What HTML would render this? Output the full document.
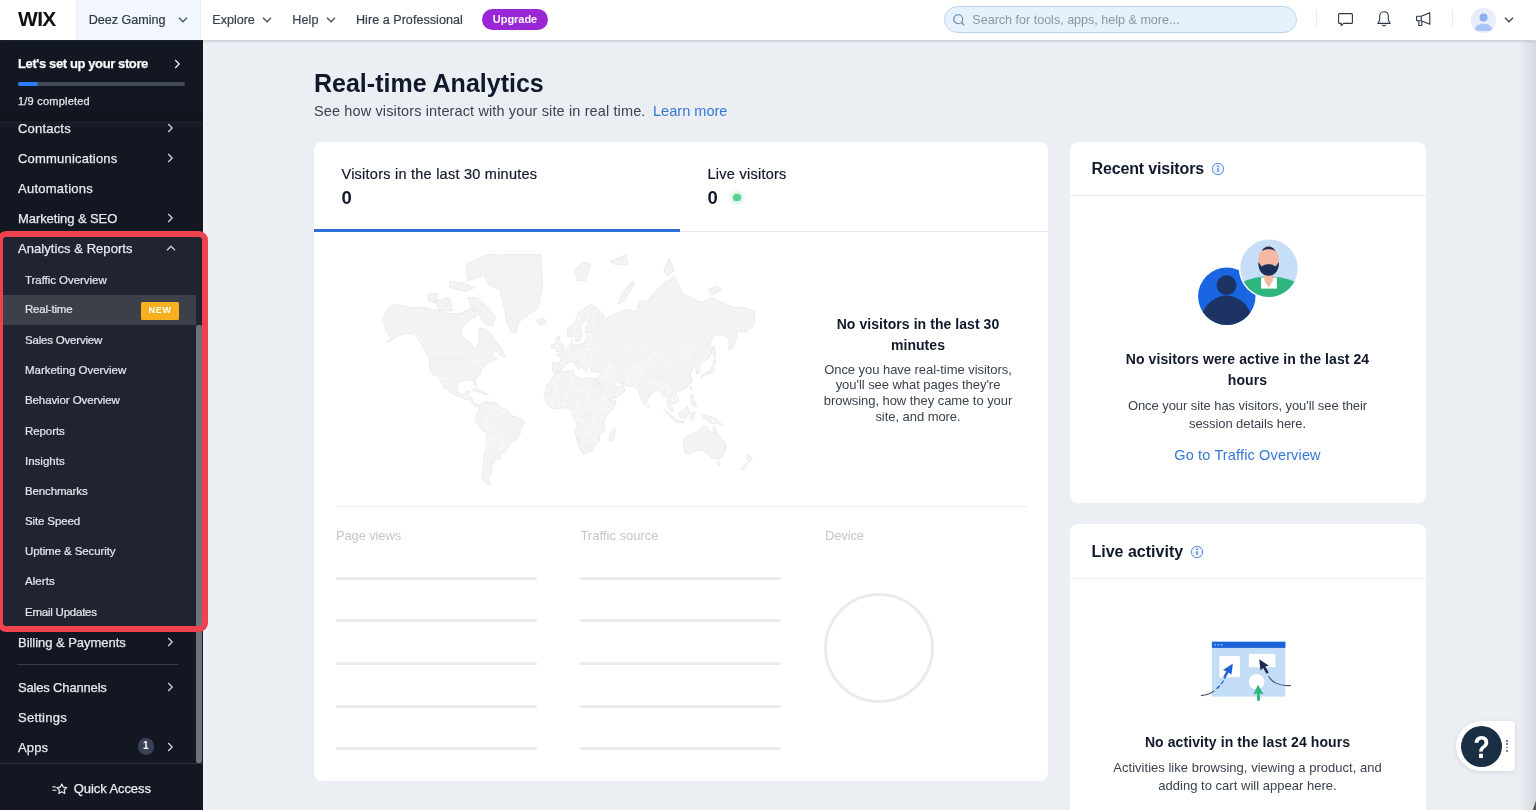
<!DOCTYPE html>
<html lang="en">
<head>
<meta charset="utf-8">
<title>Real-time Analytics</title>
<style>
*{box-sizing:border-box;margin:0;padding:0}
html,body{width:1536px;height:810px;overflow:hidden}
body>*{will-change:transform}
body{font-family:"Liberation Sans",sans-serif;background:#ebeef3;color:#10192b;position:relative}
.abs{position:absolute}
#top{position:absolute;left:0;top:0;width:1536px;height:40px;background:#fff;box-shadow:0 1px 3px rgba(60,80,110,.28);z-index:5}
#top .t{position:absolute;font-size:12.6px;color:#36424f;line-height:16px;white-space:nowrap;top:11.6px;-webkit-text-stroke:.2px #36424f}
#logo{position:absolute;left:18px;top:6px;font-weight:bold;font-size:19.5px;line-height:26px;letter-spacing:-0.6px;color:#111;transform-origin:0 50%;transform:scaleX(1.075)}
#site{position:absolute;left:76px;top:0;width:125px;height:40px;background:#f2f7fd;border-left:1px solid #e6eef8;border-right:1px solid #e6eef8}
#upg{position:absolute;left:482px;top:8.5px;width:66px;height:21.5px;border-radius:11px;background:#9a27d5;color:#fff;font-weight:bold;font-size:11px;line-height:21.5px;text-align:center;letter-spacing:-.05px}
#search{position:absolute;left:944px;top:6px;width:353px;height:26.5px;border-radius:13.5px;background:#e5f1fc;border:1px solid #b9d4f0}
#search span{position:absolute;left:27.3px;top:4.600px;font-size:12.6px;line-height:16px;color:#8996a4;white-space:nowrap;letter-spacing:-.02px}
.vd{position:absolute;top:10px;width:1px;height:18px;background:#e9edf1}
#side{position:absolute;left:0;top:40px;width:203px;height:770px;background:#131721;z-index:3;overflow:hidden}
#side .m{position:absolute;left:18px;font-size:13px;line-height:16px;color:#e6e9ef;white-space:nowrap;-webkit-text-stroke:.25px #e6e9ef}
#side .s{position:absolute;left:25px;font-size:11.5px;line-height:14px;color:#e3e6ec;white-space:nowrap;-webkit-text-stroke:.22px #e3e6ec}
#sub{position:absolute;left:0;top:194px;width:203px;height:394px;background:#1f2430}
#sel{position:absolute;left:0;top:255px;width:196px;height:30px;background:#3d4049}
#new{position:absolute;left:141px;top:262px;width:37.500px;height:17.500px;background:#f8b11e;color:#fff;font-size:9px;font-weight:bold;letter-spacing:.7px;line-height:17.500px;text-align:center;border-radius:1.500px;text-indent:.7px}
#red{position:absolute;left:-3.500px;top:230.600px;width:210.500px;height:401px;border:6.800px solid #f0414f;border-radius:9px;z-index:6}
#scroll{position:absolute;left:196.300px;top:285px;width:5.700px;height:437.500px;background:#6e727a;border-radius:2px}
.card{position:absolute;background:#fff;border-radius:8px}
h1{position:absolute;left:314px;top:68.3px;font-size:25px;line-height:30px;font-weight:bold;color:#10192b;white-space:nowrap;letter-spacing:0px}
.sk{position:absolute;height:3px;background:#e9ebed;border-radius:2px}
.c{text-align:center;position:absolute;white-space:nowrap}
.b14{font-size:14px;font-weight:bold;color:#10192b}
.d13{font-size:13px;color:#3a4350}
.lbl{position:absolute;top:386.3px;font-size:13px;line-height:16px;color:#c3c7cb;white-space:nowrap}
</style>
</head>
<body>

<div id="top">
  <div id="logo">WIX</div>
  <div id="site"></div>
  <div class="t" style="left:88.700px;color:#2a3542;letter-spacing:-.03px">Deez Gaming</div>
  <svg class="abs" style="left:178px;top:17px" width="10" height="6" viewBox="0 0 10 6"><path d="M1 .8l4 4 4-4" fill="none" stroke="#46525f" stroke-width="1.3"/></svg>
  <div class="t" style="left:212.300px;letter-spacing:-.03px">Explore</div>
  <svg class="abs" style="left:262px;top:17px" width="10" height="6" viewBox="0 0 10 6"><path d="M1 .8l4 4 4-4" fill="none" stroke="#46525f" stroke-width="1.3"/></svg>
  <div class="t" style="left:292.2px;letter-spacing:.15px">Help</div>
  <svg class="abs" style="left:326px;top:17px" width="10" height="6" viewBox="0 0 10 6"><path d="M1 .8l4 4 4-4" fill="none" stroke="#46525f" stroke-width="1.3"/></svg>
  <div class="t" style="left:356px;letter-spacing:.02px">Hire a Professional</div>
  <div id="upg">Upgrade</div>
  <div id="search">
    <svg class="abs" style="left:7px;top:6px" width="14" height="14" viewBox="0 0 14 14"><circle cx="6.2" cy="6.2" r="4.500" fill="none" stroke="#6583a3" stroke-width="1.1"/><path d="M9.500 9.500l2.800 2.800" stroke="#6583a3" stroke-width="1.1"/></svg>
    <span>Search for tools, apps, help &amp; more...</span>
  </div>
  <div class="vd" style="left:1315.500px"></div>
  <svg class="abs" style="left:1337px;top:12px" width="17" height="16" viewBox="0 0 17 16"><path d="M2.600 1.600h11.800c.6 0 1 .4 1 1v7.800c0 .6-.4 1-1 1H6.600l-2.400 2.200v-2.200H2.600c-.6 0-1-.4-1-1V2.600c0-.6.4-1 1-1z" fill="none" stroke="#2c3845" stroke-width="1.100" stroke-linejoin="round"/></svg>
  <svg class="abs" style="left:1376px;top:10px" width="16" height="18" viewBox="0 0 16 18"><path d="M8 1.800c-2.800 0-4.300 2-4.300 4.700v3.400L1.900 13.400h12.200l-1.800-3.500V6.500c0-2.700-1.500-4.700-4.300-4.700z" fill="none" stroke="#2c3845" stroke-width="1.100" stroke-linejoin="round"/><path d="M6.300 14.600c.3.900 1 1.300 1.700 1.300s1.400-.4 1.700-1.300" fill="none" stroke="#2c3845" stroke-width="1.100"/></svg>
  <svg class="abs" style="left:1415px;top:11px" width="17" height="17" viewBox="0 0 17 17"><path d="M1.600 5.300h4.600l8.600-3.500v11.400l-8.600-3.500H1.600z" fill="none" stroke="#2c3845" stroke-width="1.100" stroke-linejoin="round"/><path d="M3.800 9.900v4.600h3v-4.300" fill="none" stroke="#2c3845" stroke-width="1.100" stroke-linejoin="round"/><path d="M6.200 5.300v4.400" stroke="#2c3845" stroke-width="1.100"/></svg>
  <div class="vd" style="left:1451.500px"></div>
  <svg class="abs" style="left:1470.500px;top:7.500px" width="25" height="25" viewBox="0 0 26 26"><defs><clipPath id="av"><circle cx="13" cy="13" r="13"/></clipPath></defs><circle cx="13" cy="13" r="13" fill="#e9edfb"/><g clip-path="url(#av)"><circle cx="13" cy="9.800" r="4.200" fill="#8eaef0"/><path d="M3.500 24c.8-5.500 4.500-7.500 9.500-7.500s8.700 2 9.500 7.500z" fill="#a9c4f6"/></g></svg>
  <svg class="abs" style="left:1503.5px;top:17px" width="10" height="6" viewBox="0 0 10 6"><path d="M1 .8l4 4 4-4" fill="none" stroke="#3a4653" stroke-width="1.3"/></svg>
</div>

<div id="side">
  <div class="m" style="top:16.2px;font-weight:bold;color:#fff;letter-spacing:-.39px">Let's set up your store</div>
  <div class="abs" style="left:18px;top:42px;width:167px;height:3.600px;background:#434957;border-radius:2px"></div>
  <div class="abs" style="left:18px;top:42px;width:19.500px;height:3.600px;background:#2c7df7;border-radius:2px"></div>
  <div class="m" style="top:53.9px;font-size:11px;line-height:14px;color:#e1e5eb;letter-spacing:.22px">1/9 completed</div>
  <div class="abs" style="left:0;top:70px;width:203px;height:10.500px;background:linear-gradient(rgba(8,10,16,0),rgba(8,10,16,.45))"></div><div class="abs" style="left:0;top:80.500px;width:203px;height:6px;background:linear-gradient(#191d28,#161a24)"></div>
  <div id="sub"></div>
  <div id="sel"></div>
  <div class="m" style="top:80.8px;letter-spacing:0.19px;">Contacts</div>
  <div class="m" style="top:110.5px;letter-spacing:0.19px;">Communications</div>
  <div class="m" style="top:140.8px;letter-spacing:0.25px;">Automations</div>
  <div class="m" style="top:170.8px;letter-spacing:-0.08px;">Marketing &amp; SEO</div>
  <div class="m" style="top:201.3px;letter-spacing:0.06px;">Analytics &amp; Reports</div>
  <div class="s" style="top:232.7px;letter-spacing:-0.05px">Traffic Overview</div>
  <div class="s" style="top:262.3px;letter-spacing:-0.2px">Real-time</div>
  <div id="new">NEW</div>
  <div class="s" style="top:292.7px;letter-spacing:-0.2px">Sales Overview</div>
  <div class="s" style="top:323.2px;letter-spacing:-0.02px">Marketing Overview</div>
  <div class="s" style="top:353.2px;letter-spacing:-0.1px">Behavior Overview</div>
  <div class="s" style="top:383.7px;letter-spacing:-0.08px">Reports</div>
  <div class="s" style="top:413.7px;letter-spacing:0px">Insights</div>
  <div class="s" style="top:444.0px;letter-spacing:-0.14px">Benchmarks</div>
  <div class="s" style="top:474.0px;letter-spacing:-0.13px">Site Speed</div>
  <div class="s" style="top:504.3px;letter-spacing:-0.09px">Uptime &amp; Security</div>
  <div class="s" style="top:534.3px;letter-spacing:0.05px">Alerts</div>
  <div class="s" style="top:564.5px;letter-spacing:-0.23px">Email Updates</div>
  <div class="m" style="top:594.8px;letter-spacing:-0.04px;">Billing &amp; Payments</div>
  <div class="abs" style="left:17px;top:624px;width:161px;height:1px;background:#383e4b"></div>
  <div class="m" style="top:639.9px;letter-spacing:-0.17px;">Sales Channels</div>
  <div class="m" style="top:670.2px;letter-spacing:0.25px;">Settings</div>
  <div class="m" style="top:700.2px;letter-spacing:0.15px;">Apps</div>
  <div class="abs" style="left:137.500px;top:698px;width:16.500px;height:16.500px;border-radius:9px;background:#3a4058;color:#fff;font-size:10px;font-weight:bold;line-height:16.500px;text-align:center">1</div>
  <div id="scroll"></div>
  <div class="abs" style="left:0;top:723px;width:203px;height:47px;background:#131721;border-top:1.500px solid #2c313d"></div>
  <div class="m" style="left:73.800px;top:740.700px;color:#eceff4;letter-spacing:-.08px">Quick Access</div>
  <svg class="abs" style="left:52px;top:743px" width="16" height="12" viewBox="0 0 16 12"><path d="M9.800 1l1.500 3.100 3.400.5-2.500 2.400.6 3.400-3-1.600-3 1.600.6-3.400-2.500-2.400 3.400-.5z" fill="none" stroke="#eceff4" stroke-width="1.150" stroke-linejoin="round"/><path d="M.5 3.800h3.200M.5 7.200h4" stroke="#eceff4" stroke-width="1.150"/></svg>
  <svg class="abs" style="left:174px;top:18.5px" width="7" height="10" viewBox="0 0 7 10"><path d="M1.2 1l4 4-4 4" fill="none" stroke="#eef0f4" stroke-width="1.3"/></svg>
  <svg class="abs" style="left:167px;top:83px" width="7" height="10" viewBox="0 0 7 10"><path d="M1.2 1l4 4-4 4" fill="none" stroke="#cdd2db" stroke-width="1.3"/></svg>
  <svg class="abs" style="left:167px;top:113px" width="7" height="10" viewBox="0 0 7 10"><path d="M1.2 1l4 4-4 4" fill="none" stroke="#cdd2db" stroke-width="1.3"/></svg>
  <svg class="abs" style="left:167px;top:173px" width="7" height="10" viewBox="0 0 7 10"><path d="M1.2 1l4 4-4 4" fill="none" stroke="#cdd2db" stroke-width="1.3"/></svg>
  <svg class="abs" style="left:165.500px;top:204.500px" width="10" height="6" viewBox="0 0 10 6"><path d="M1 5.200l4-4 4 4" fill="none" stroke="#cdd2db" stroke-width="1.300"/></svg>
  <svg class="abs" style="left:167px;top:596.5px" width="7" height="10" viewBox="0 0 7 10"><path d="M1.2 1l4 4-4 4" fill="none" stroke="#cdd2db" stroke-width="1.3"/></svg>
  <svg class="abs" style="left:167px;top:642px" width="7" height="10" viewBox="0 0 7 10"><path d="M1.2 1l4 4-4 4" fill="none" stroke="#cdd2db" stroke-width="1.3"/></svg>
  <svg class="abs" style="left:167px;top:702px" width="7" height="10" viewBox="0 0 7 10"><path d="M1.2 1l4 4-4 4" fill="none" stroke="#cdd2db" stroke-width="1.3"/></svg>
</div>
<div id="red"></div>

<div class="abs" style="left:203px;top:40px;width:4px;height:770px;background:linear-gradient(90deg,#f1f5fa,#ebeef3)"></div>
<h1>Real-time Analytics</h1>
<div class="abs" style="left:314.300px;top:102.8px;font-size:14.500px;line-height:17px;color:#3a4350;white-space:nowrap;letter-spacing:.125px">See how visitors interact with your site in real time.</div>
<div class="abs" style="left:652.800px;top:102.8px;font-size:14.500px;line-height:17px;color:#3578d3;white-space:nowrap;letter-spacing:.03px">Learn more</div>

<div class="card" id="c1" style="left:314px;top:142px;width:734px;height:638.500px">
  <div class="abs" style="left:27.500px;top:23.800px;font-size:14.500px;line-height:17px;white-space:nowrap;letter-spacing:.24px;-webkit-text-stroke:.2px #10192b">Visitors in the last 30 minutes</div>
  <div class="abs" style="left:27.500px;top:45.100px;font-size:18.500px;line-height:21px;font-weight:bold">0</div>
  <div class="abs" style="left:393.500px;top:23.800px;font-size:14.500px;line-height:17px;white-space:nowrap;letter-spacing:.26px;-webkit-text-stroke:.2px #10192b">Live visitors</div>
  <div class="abs" style="left:393.500px;top:45.100px;font-size:18.500px;line-height:21px;font-weight:bold">0</div>
  <div class="abs" style="left:419px;top:51.500px;width:7.500px;height:7.500px;border-radius:4px;background:#56cf8f;box-shadow:0 0 3.500px 2.500px rgba(86,207,143,.3)"></div>
  <div class="abs" style="left:366px;top:89px;width:368px;height:1px;background:#e4e8ed"></div>
  <div class="abs" style="left:0;top:86.500px;width:366px;height:3px;background:#2e6fd5"></div>
  <svg class="abs" style="left:0;top:0" width="733" height="380" viewBox="0 0 733 380"><path d="M68.2,177.1 74.7,165.6 81.1,162.4 97.1,165.6 111.0,165.6 124.9,168.7 132.4,171.6 146.4,171.6 151.7,168.7 160.3,165.6 162.4,174.4 156.0,177.1 147.4,186.8 148.5,195.4 157.1,201.2 160.3,206.6 163.5,203.1 165.6,197.4 164.5,186.8 171.0,186.8 178.4,193.4 181.7,199.3 188.1,206.6 183.8,210.0 177.4,210.0 179.5,214.9 183.8,216.4 177.4,219.5 173.1,220.9 172.0,223.8 168.8,225.2 166.7,229.3 166.7,232.0 161.3,237.1 162.4,243.2 160.3,243.2 159.2,238.3 152.8,238.3 147.4,239.6 144.2,242.0 143.1,247.9 145.3,251.3 150.6,252.4 151.7,249.0 154.9,249.0 153.8,254.7 158.1,255.8 159.2,261.2 163.5,262.3 165.6,263.4 162.4,264.5 157.1,261.2 154.9,258.0 149.6,256.9 145.3,254.7 135.6,250.2 134.6,246.7 130.3,246.7 127.1,239.6 124.9,237.1 122.8,234.6 118.5,232.0 115.3,225.2 115.3,214.9 111.0,208.4 105.7,199.3 101.4,193.4 91.8,191.3 85.4,193.4 78.9,197.4 72.5,201.2 76.8,195.4 71.4,189.1 71.4,182.1ZM162.4,155.5 171.0,162.4 181.7,174.4 178.4,184.5 171.0,182.1 164.5,171.6 157.1,165.6 153.8,155.5ZM121.7,159.0 135.6,155.5 138.9,168.7 124.9,168.7ZM114.2,151.7 123.9,151.7 121.7,160.7 114.2,159.0ZM151.7,122.6 173.1,112.6 181.7,112.6 167.8,133.9 153.8,138.8ZM135.6,138.8 149.6,141.2 160.3,145.6 151.7,149.7 135.6,145.6ZM184.9,213.3 191.3,214.9 188.1,208.4ZM157.1,247.9 162.4,246.7 168.8,250.2 164.5,250.2ZM168.8,250.7 174.7,251.9 172.0,252.4 168.8,252.1ZM169.9,133.9 183.8,112.6 210.5,112.6 226.6,112.6 228.7,143.4 224.5,165.6 215.9,171.6 205.2,179.6 202.0,191.3 196.6,189.1 192.4,179.6 190.2,165.6 185.9,147.7 175.2,143.4ZM222.3,178.4 228.7,175.7 233.0,179.6 228.7,183.3 224.5,182.1ZM165.6,263.4 171.0,259.1 175.2,260.2 181.7,260.7 187.0,265.6 193.4,267.7 194.5,272.0 200.9,274.7 208.4,277.4 210.5,280.6 206.3,287.1 206.3,291.6 203.1,297.3 196.6,300.8 191.3,309.4 185.9,312.0 187.0,316.0 181.7,317.4 178.4,323.1 177.4,330.7 174.2,337.4 176.3,342.8 171.0,340.9 167.8,334.0 169.9,321.6 169.9,314.7 172.0,305.7 173.1,291.6 166.7,287.1 161.3,278.4 162.4,272.0 164.5,268.8ZM238.4,220.9 238.4,229.3 242.6,230.7 248.0,227.3 251.2,222.4 254.4,220.9 258.7,219.5 260.8,222.4 265.1,228.0 267.3,225.2 261.9,217.2 268.3,222.4 269.4,226.6 272.6,230.0 273.7,225.2 278.0,223.8 276.9,229.3 281.2,230.0 286.5,230.7 285.5,235.8 282.2,237.1 284.4,240.8 289.7,249.0 294.0,256.9 296.1,258.5 303.6,254.7 310.1,250.2 311.1,246.7 307.9,243.2 302.6,245.5 299.4,238.3 302.6,239.6 309.0,242.6 314.3,244.4 319.7,244.4 325.0,249.0 326.1,254.7 330.4,263.4 333.6,258.0 335.7,253.5 341.1,249.0 345.4,247.9 348.6,253.5 352.9,254.7 352.9,262.3 356.1,268.8 359.3,270.4 358.2,265.6 355.0,258.0 360.4,262.3 364.6,259.1 363.6,254.7 361.4,250.2 365.7,249.0 370.0,247.3 376.4,242.0 378.5,237.1 375.3,232.0 378.5,229.3 377.5,225.2 381.8,226.6 382.8,232.0 386.0,230.7 385.0,225.2 388.2,220.9 392.5,218.0 397.8,211.7 398.9,204.9 394.6,203.1 399.9,193.4 408.5,192.3 414.9,197.4 414.9,208.4 419.2,204.9 422.4,195.4 422.4,189.1 431.0,190.2 439.5,184.5 440.6,179.6 440.6,168.7 429.9,165.6 419.2,165.6 408.5,160.7 397.8,155.5 387.1,160.7 368.9,151.7 360.4,133.9 349.6,141.2 339.0,151.7 333.6,159.0 326.1,159.0 321.8,170.1 312.2,167.2 305.8,170.1 295.1,174.4 291.9,177.1 287.6,182.1 290.8,174.4 284.4,167.2 278.0,162.4 271.5,165.6 264.0,171.6 259.8,182.1 253.4,186.8 253.4,194.4 256.6,195.4 259.8,193.4 261.9,199.3 266.2,198.4 268.3,191.3 266.2,185.7 271.5,177.1 274.8,179.6 271.5,185.7 271.5,191.3 278.0,190.2 279.0,192.3 273.7,193.4 271.5,197.4 270.5,201.2 263.0,203.1 258.7,203.1 257.6,197.4 256.6,203.1 252.3,206.6 250.1,208.4 245.9,211.7 242.6,212.5 246.9,216.4 245.9,220.2ZM242.6,210.0 249.1,208.4 250.1,204.9 245.9,199.3 245.9,194.4 241.6,195.4 242.6,201.2 244.8,204.0 242.6,206.6ZM237.3,206.6 241.6,206.6 241.6,201.2 237.3,203.1ZM241.6,230.7 251.2,229.3 258.7,228.7 259.8,233.3 269.4,237.1 274.8,235.8 282.2,237.1 284.4,240.8 287.6,247.9 289.7,255.2 294.0,259.1 302.6,259.1 299.4,266.6 292.9,273.1 289.7,278.4 290.8,288.2 285.5,293.8 285.5,298.5 282.2,302.0 278.0,309.4 269.4,312.0 267.3,309.4 264.0,302.0 260.8,290.5 263.0,283.8 260.8,277.4 257.6,272.0 257.6,267.7 253.4,265.6 243.7,266.6 239.4,267.2 234.1,262.9 229.8,256.3 230.9,250.2 234.1,241.4 237.3,238.3ZM300.4,284.9 301.5,289.3 298.3,299.6 295.1,298.5 295.1,292.7 298.3,288.2ZM370.0,296.1 378.5,291.6 386.0,288.2 388.2,284.9 393.5,284.9 394.6,289.3 398.9,290.5 399.9,283.8 404.2,292.7 411.7,300.8 411.7,306.9 408.5,314.7 404.2,317.4 397.8,316.0 393.5,312.0 388.2,307.5 380.7,309.4 374.3,312.0 371.0,310.7 368.9,300.8ZM403.1,320.2 406.4,320.2 405.3,323.8 404.2,323.8ZM433.1,312.0 438.5,316.0 435.2,320.9 433.1,317.4ZM432.0,320.2 434.2,321.6 428.8,328.3 426.7,327.6ZM387.1,237.1 389.2,233.3 393.5,232.0 398.9,230.7 399.9,225.2 398.9,218.0 403.1,219.5 398.9,223.1 395.7,229.3 390.3,231.3 387.1,233.9ZM399.9,203.1 401.5,210.0 401.0,216.4 399.9,214.9 399.9,208.4ZM349.6,266.1 359.3,275.2 361.4,278.4 356.1,275.2ZM361.4,278.4 370.0,279.5 370.0,281.1 361.4,280.0ZM364.6,270.9 368.9,268.8 373.2,264.5 375.3,270.9 372.1,276.3 365.7,275.2ZM376.4,270.9 381.8,270.4 378.5,277.4 376.4,277.4ZM388.2,273.1 395.7,274.1 403.1,277.4 408.5,282.8 401.0,281.7 395.7,280.6 389.2,275.2ZM376.4,252.4 378.5,252.4 380.7,259.1 382.8,264.5 378.5,264.5 376.4,256.9ZM333.6,261.8 335.7,264.5 334.1,265.6ZM377.5,244.4 378.5,245.5 376.9,247.9 376.4,246.1ZM259.8,128.5 269.4,119.5 276.9,122.6 271.5,138.8 264.0,138.8ZM303.6,162.4 307.9,151.7 318.6,138.8 320.8,141.2 310.1,159.0ZM296.1,119.5 312.2,112.6 314.3,122.6 301.5,122.6ZM349.6,128.5 355.0,116.2 360.4,128.5 352.9,133.9ZM394.6,147.7 403.1,143.4 408.5,147.7 397.8,153.6Z" fill="#f3f3f4" stroke="#e3e3e4" stroke-width=".6" stroke-linejoin="round"/><path d="M116.4,211.7 146.4,211.7 152.8,213.3 159.2,216.4 160.3,221.7 163.5,220.2 167.8,218.0 172.0,218.0 176.3,214.9M97.1,165.6 97.1,191.3 103.5,193.4 108.9,201.2M122.8,235.2 129.2,236.5 134.0,236.2 137.8,239.6 141.5,241.4 144.0,243.2M149.6,256.3 151.2,252.6 152.8,252.6 153.3,254.7M152.8,256.5 154.2,257.7M158.5,260.2 156.3,260.0M159.6,261.8 159.3,263.3M171.0,259.6 170.4,263.4 173.1,264.5 175.8,265.6 176.3,270.4M183.8,266.6 179.5,269.9 176.3,270.4 173.1,273.1 173.1,276.6 169.9,280.0 172.6,283.8 177.9,282.8 183.8,286.6 185.9,289.9 185.9,293.8 188.6,296.7 189.7,300.2 186.5,305.7 190.8,310.1M183.8,263.1 183.8,266.6 187.0,269.9 192.4,269.3 192.9,267.7M186.8,265.7 187.0,269.9M190.2,265.9 189.7,269.5M162.4,275.7 167.2,272.2 173.1,276.6M163.7,270.5 167.2,272.2M172.6,283.8 174.2,288.8 173.6,291.0 175.2,296.1 173.1,302.0 172.6,309.4 171.5,318.8 170.4,332.3 173.1,337.4M175.2,296.1 181.1,296.1 185.9,293.8M181.1,296.1 186.5,300.0 189.7,300.2M186.5,305.7 185.5,310.6M246.1,220.4 251.4,221.8M238.6,222.4 241.0,222.4 240.5,225.9 240.1,229.1M250.7,208.4 254.4,210.9 256.8,211.7 256.0,214.1 254.4,216.0 255.5,219.5 256.0,219.8M251.6,207.7 254.4,207.0 255.5,204.3M254.4,210.9 254.4,207.0M263.2,203.3 264.0,208.4 261.4,209.5 262.8,212.2 261.9,214.1 258.2,214.1 256.0,214.1M258.2,214.1 259.2,215.2 262.7,215.7 265.2,215.2 266.2,213.3 262.8,212.2M255.5,216.4 259.2,215.2M262.7,215.7 262.7,217.1M264.0,208.4 268.3,210.9 272.3,211.7 273.7,209.2 273.1,205.8 272.9,202.5 269.2,202.3M266.2,213.3 268.1,213.6 271.8,212.7 272.3,211.7M265.2,215.2 265.7,215.8 268.1,216.6 269.7,216.1 271.8,212.7M269.7,216.1 272.3,218.7 272.0,222.0 269.9,223.8 269.4,225.6M272.3,218.7 276.9,219.3 278.6,219.9M272.0,222.0 272.5,223.4 276.1,222.8 278.0,222.4M276.1,222.8 275.8,224.2M262.6,217.2 264.6,217.5 268.3,218.0 268.8,218.1 269.0,221.7M271.8,212.7 274.6,213.8 276.5,212.8 278.2,217.2 279.8,217.7M276.5,212.8 279.2,215.7 280.1,215.8M273.7,209.2 273.1,205.8M273.1,207.3 276.9,207.5 280.7,207.7 282.0,206.5M272.9,202.5 275.6,201.4 276.5,199.9 278.0,199.3M270.5,199.2 274.8,198.8 276.5,199.9M274.1,195.6 277.3,196.4M280.1,167.2 278.5,177.1 280.1,184.5 278.0,190.2M270.0,168.7 273.4,171.6 273.7,177.6M270.0,168.7 267.3,170.1 263.5,177.1 260.8,183.8 261.2,189.1 260.3,193.4M278.0,192.3 277.4,196.4 278.0,199.3 281.2,201.2 282.2,204.9 281.7,206.6 284.4,207.5 286.0,209.5 290.8,210.7 290.5,213.6 288.9,214.7M290.7,220.4 294.5,221.5 297.8,222.7 299.1,223.5 300.0,222.7M292.4,223.1 294.5,223.7 296.1,223.4 297.8,222.7M294.5,223.7 295.9,225.6M296.1,223.4 297.8,226.8M298.3,213.3 297.8,210.0 302.6,207.5 306.9,208.4 311.1,208.4 313.8,203.4 321.8,200.7 324.0,202.7 329.9,203.1 333.6,208.4 336.8,208.4 341.4,211.4M298.3,213.3 300.4,215.7M341.4,211.4 346.4,208.7 352.9,206.6 357.1,209.2 362.5,210.0 370.0,209.7 372.9,210.4 375.9,210.0 377.5,204.3 382.8,204.9 388.2,212.2 392.5,212.7 390.3,218.0 388.2,220.9M341.9,211.5 345.4,217.2 350.2,219.2 351.8,221.4 360.4,223.0 366.1,221.4 367.8,218.0 372.9,215.7 376.2,215.4 372.9,210.4M341.4,211.4 339.5,214.9 336.8,214.6 333.9,218.0 333.8,222.1 327.0,225.5 328.0,229.1 331.5,231.3 332.5,235.2 334.9,238.1 340.0,240.8 343.0,241.4 346.4,241.0 352.1,240.4 353.6,244.4 352.5,245.5 354.1,247.9 356.3,248.8 357.4,247.3 360.7,246.5 363.6,248.4M333.8,222.1 328.2,221.2 324.0,222.0 323.4,224.5 327.0,225.5M323.4,224.5 320.2,226.3 320.5,229.1M304.7,222.4 307.9,223.4 310.6,217.2 314.3,220.2 318.6,221.7 320.8,223.8 323.4,224.5M305.7,228.9 309.2,227.7 313.5,229.9 319.2,228.8 320.5,229.1 324.5,229.6 328.0,229.1M328.0,229.1 327.7,234.6 327.7,237.1 324.0,240.8 322.9,244.4 321.0,245.9M324.5,229.6 322.9,233.3 322.2,236.0 318.9,238.4 314.1,238.6M295.9,225.6 299.4,227.3 300.4,228.5M313.5,229.9 313.3,233.3 313.3,236.6 314.1,238.6 315.6,241.7 313.9,244.1M295.9,225.6 295.3,229.3 297.2,231.3 296.7,233.4 299.0,237.1 300.0,238.3M286.5,230.7 288.7,229.6 293.3,229.1 295.3,229.3M286.2,234.9 289.5,234.0 291.9,232.8 293.3,229.1M289.5,234.0 289.7,235.8 295.1,239.3M285.5,238.9 287.6,236.5 289.7,235.8 295.1,239.3 298.8,239.6 299.8,240.2M294.0,254.1 298.3,253.5 303.6,251.3 307.4,247.9 307.1,247.0 307.9,244.6M303.6,251.3 304.7,254.0M303.2,245.3 307.4,247.9M342.3,242.7 344.1,243.2 346.5,244.4 347.0,245.9 346.0,246.7 346.8,248.4M342.3,242.7 343.0,247.9M333.7,239.8 336.8,241.5 342.3,242.7M346.8,248.4 347.8,245.5 349.3,243.8 352.1,240.4M353.6,244.4 353.4,253.5 353.9,260.2M354.1,247.9 355.1,249.8 356.3,248.8M355.1,249.8 356.4,252.8 359.3,252.1 360.0,254.1 361.0,256.3 357.7,256.6 358.1,259.4M357.4,247.3 359.2,249.7 363.1,254.3 363.0,256.3 361.0,256.3M363.0,256.3 361.4,260.2M355.1,265.0 357.1,265.4M382.8,228.0 385.4,227.2M381.0,225.2 383.8,222.7 385.3,223.1 387.7,221.8M245.6,232.0 246.7,235.6 238.7,239.9 238.7,241.6 234.1,241.1M257.2,229.5 256.0,233.5 258.2,238.1 258.7,244.9 260.8,246.1 263.0,247.2 273.7,250.7 273.7,250.2 274.8,247.9 274.8,236.3M258.2,238.1 260.3,234.4M229.8,249.0 234.1,248.7 234.1,246.7 235.2,243.2 238.7,241.6 242.9,244.4 241.0,244.4 242.1,255.2 235.7,255.2 234.9,256.1 230.3,254.7M242.9,244.4 249.3,249.0 251.5,251.3 252.5,251.2 252.5,255.8 248.2,255.8 244.8,257.2 242.1,260.9 239.4,261.0 235.7,258.6 234.9,256.1M251.5,251.3 254.4,250.4 260.8,246.1M263.0,247.2 264.0,246.7 264.6,249.0 264.6,253.8 262.4,257.2 263.5,259.6 264.0,261.2 262.8,261.7 264.6,264.0 263.6,266.6 265.1,269.6M274.8,247.9 287.5,247.9M273.7,250.7 273.7,255.0 272.1,256.9 271.9,260.2 273.4,262.7 277.3,266.6M273.4,262.7 274.8,260.9 278.0,262.0 280.1,260.9 283.0,259.1 284.3,261.8 283.3,263.4 286.4,267.1 283.8,267.9 281.0,268.3M287.1,256.5 288.7,256.1 293.4,258.5 294.0,259.6M287.1,256.5 286.6,258.3 284.5,260.6 283.3,263.4M286.4,267.1 292.8,267.8 296.1,266.6 299.4,263.4 294.0,259.6M292.8,267.8 291.9,272.9 292.4,273.8M284.4,273.1 288.2,275.2 289.9,277.0M286.4,267.1 284.4,267.5 285.5,270.2 284.4,273.1 280.6,273.1M261.1,278.2 265.7,278.3 269.4,279.5 271.5,283.8 273.7,283.8 277.3,284.9 279.0,286.5 278.4,281.7 281.0,280.8 279.6,276.7 279.2,273.5 280.1,270.9 281.4,269.6 281.0,268.3 277.3,266.6 272.0,267.6 267.9,268.3 267.0,272.5 265.1,274.7 263.4,277.1 261.1,278.2M258.5,269.5 262.2,269.6 265.1,269.6M258.5,270.9 260.1,270.9 260.1,269.6M259.9,276.2 263.4,277.1M263.0,273.6 263.4,269.6M260.6,290.7 267.7,290.9 273.0,291.1 275.0,291.4M273.7,283.8 271.5,286.0 271.5,289.6 273.0,291.1M269.4,296.1 269.4,303.7 265.7,304.0M269.4,291.5 270.5,291.9 269.4,296.1M269.4,299.4 275.1,300.5 279.5,296.4 281.5,296.6 282.2,301.8M275.0,291.4 276.9,291.6 279.5,296.4M275.0,291.4 278.9,289.2 280.5,288.9 283.3,287.1 283.0,282.2 281.0,280.8M280.5,288.9 283.2,290.1 283.2,293.4 281.5,296.6M283.0,282.2 284.4,282.2 285.0,284.5 288.1,284.6 291.2,283.3M285.0,284.5 286.4,288.1 285.8,290.6M250.9,265.1 251.9,259.4 252.5,257.4 262.4,257.2M261.9,264.5 257.2,266.9M263.5,259.6 261.9,264.5M249.3,265.5 249.0,260.2M244.7,266.5 245.1,261.8 244.8,257.2M240.0,267.3 238.9,263.8 239.4,261.0M235.7,264.6 237.0,262.9 233.8,262.2M232.0,260.2 233.3,258.3 230.1,258.6M230.0,257.3 232.0,257.1M398.9,274.8 398.9,281.9M365.3,269.9 367.8,270.4 371.0,269.3 373.7,267.5" fill="none" stroke="#fff" stroke-width=".55" stroke-linejoin="round" opacity=".95"/></svg>
  <div class="c b14" style="left:504px;top:171.900px;width:200px;line-height:21.200px;letter-spacing:.06px">No visitors in the last 30<br>minutes</div>
  <div class="c d13" style="left:494px;top:219.600px;width:220px;line-height:15.800px;letter-spacing:-.05px">Once you have real-time visitors,<br>you'll see what pages they're<br>browsing, how they came to your<br>site, and more.</div>
  <div class="abs" style="left:22px;top:364px;width:691px;height:1px;background:#eaedf0"></div>
  <div class="lbl" style="left:22px;letter-spacing:-.15px">Page views</div>
  <div class="lbl" style="left:266.400px">Traffic source</div>
  <div class="lbl" style="left:511px;letter-spacing:-.15px">Device</div>
  <div class="sk" style="left:22px;top:434.5px;width:201px"></div><div class="sk" style="left:22px;top:477.0px;width:201px"></div><div class="sk" style="left:22px;top:520.0px;width:201px"></div><div class="sk" style="left:22px;top:562.5px;width:201px"></div><div class="sk" style="left:22px;top:605.0px;width:201px"></div><div class="sk" style="left:266px;top:434.5px;width:201px"></div><div class="sk" style="left:266px;top:477.0px;width:201px"></div><div class="sk" style="left:266px;top:520.0px;width:201px"></div><div class="sk" style="left:266px;top:562.5px;width:201px"></div><div class="sk" style="left:266px;top:605.0px;width:201px"></div>
  <div class="abs" style="left:510px;top:451px;width:110px;height:110px;border-radius:55px;border:3.500px solid #e9ebed"></div>
</div>

<div class="card" style="left:1069.500px;top:142px;width:355.500px;height:360.500px">
  <div class="abs" style="left:21.500px;top:17.100px;font-size:16px;line-height:20px;font-weight:bold;white-space:nowrap;letter-spacing:-.15px">Recent visitors</div>
  <svg class="abs" style="left:141px;top:20px" width="14" height="14" viewBox="0 0 14 14"><circle cx="7" cy="7" r="5.7" fill="#e9f1fb" stroke="#5b90d6" stroke-width="1"/><path d="M7 6.2v3.600" stroke="#3f76c8" stroke-width="1.3"/><circle cx="7" cy="4.300" r=".85" fill="#3f76c8"/></svg>
  <div class="abs" style="left:0;top:52.500px;width:355.500px;height:1px;background:#eaedf0"></div>
  <svg id="ill1" class="abs" style="left:120px;top:90px" width="116" height="100" viewBox="1189.500 232 116 100">
    <defs><clipPath id="cpa"><circle cx="1226.300" cy="296.300" r="28.700"/></clipPath><clipPath id="cpb"><circle cx="1268.500" cy="268.200" r="28.700"/></clipPath></defs>
    <circle cx="1226.300" cy="296.300" r="28.700" fill="#1a66e2"/>
    <g clip-path="url(#cpa)"><circle cx="1226" cy="285.200" r="9.900" fill="#1c3363"/><ellipse cx="1226" cy="327" rx="27" ry="31.500" fill="#1c3363"/></g>
    <circle cx="1268.500" cy="268.200" r="30.200" fill="#fff"/>
    <circle cx="1268.500" cy="268.200" r="28.700" fill="#c6def6"/>
    <g clip-path="url(#cpb)">
      <path d="M1240 283c9-4.500 19-6.500 28.500-6.500s19.500 2 28.500 6.500v16h-57z" fill="#2fb67e"/>
      <path d="M1260.700 277.500l7.800 11 7.800-11v11h-15.600z" fill="#fff"/>
      <path d="M1260.700 277.500h15.600v10.800h-15.600z" fill="#fff"/>
      <path d="M1263.700 270h9v10l-4.500 7.500-4.500-7.500z" fill="#f6b8a5"/>
      <ellipse cx="1268.100" cy="260" rx="10.300" ry="13.600" fill="#f6b8a5"/>
      <path d="M1257.800 262c1.200 1.500 2.200 3 3.200 4.500 2.200-1.700 4.600-2.300 7.100-2.300s4.900.6 7.100 2.300c1-1.500 2-3 3.200-4.500.3 8-3.700 13.800-10.300 13.800s-10.600-5.800-10.300-13.800z" fill="#1c2f58"/>
      <path d="M1261.200 251c1.500-3 4-4.600 6.900-4.600s5.400 1.600 6.900 4.600c-2-1.200-4.300-1.700-6.900-1.700s-4.900.5-6.900 1.700z" fill="#1c2f58"/>
    </g>
  </svg>
  <div class="c b14" style="left:27.500px;top:207.100px;width:300px;line-height:20.900px;letter-spacing:.08px">No visitors were active in the last 24<br>hours</div>
  <div class="c d13" style="left:27.500px;top:255px;width:300px;line-height:17.600px;letter-spacing:-.07px">Once your site has visitors, you'll see their<br>session details here.</div>
  <div class="c" style="left:27.500px;top:305px;width:300px;font-size:14.500px;line-height:17px;color:#3578d3;letter-spacing:.15px">Go to Traffic Overview</div>
</div>

<div class="card" style="left:1069.500px;top:524px;width:355.500px;height:300px">
  <div class="abs" style="left:21.500px;top:17.600px;font-size:16px;line-height:20px;font-weight:bold;white-space:nowrap">Live activity</div>
  <svg class="abs" style="left:120px;top:21px" width="14" height="14" viewBox="0 0 14 14"><circle cx="7" cy="7" r="5.7" fill="#e9f1fb" stroke="#5b90d6" stroke-width="1"/><path d="M7 6.2v3.600" stroke="#3f76c8" stroke-width="1.3"/><circle cx="7" cy="4.300" r=".85" fill="#3f76c8"/></svg>
  <div class="abs" style="left:0;top:53.700px;width:355.500px;height:1px;background:#eaedf0"></div>
  <svg id="ill2" class="abs" style="left:120.500px;top:106px" width="110" height="80" viewBox="1190 630 110 80">
    <rect x="1210.900" y="641.700" width="73.500" height="55" fill="#c4ddf6"/>
    <rect x="1210.900" y="641.700" width="73.500" height="6.200" fill="#1c63d9"/>
    <circle cx="1214.300" cy="644.800" r=".9" fill="#9cc0f2"/><circle cx="1217.600" cy="644.800" r=".9" fill="#9cc0f2"/><circle cx="1220.900" cy="644.800" r=".9" fill="#9cc0f2"/>
    <rect x="1218.300" y="656.100" width="20.600" height="21.100" fill="#fff"/>
    <rect x="1247.800" y="653.900" width="26.600" height="13.300" fill="#fff"/>
    <circle cx="1255.600" cy="681.700" r="7.800" fill="#fff"/>
    <path d="M1200 695.600c5.500-.5 10-2.200 13.500-5" fill="none" stroke="#45526b" stroke-width="1.100"/><path d="M1215.500 688.800c3.800-3 6.500-6.800 8.600-11" fill="none" stroke="#1c63d9" stroke-width="1.300" stroke-dasharray="4.500 2"/>
    <path d="M1231.900 663.600l-1.500 11.200-2.800-2.300-3.300 5.700-2.200-1.300 3.300-5.700-3.400-1.300z" fill="#1c63d9"/>
    <path d="M1258.200 659.200l9.700 6.500-3.600.9 3.400 5.900-2.200 1.300-3.400-5.900-2.600 2.700z" fill="#1b2a4e"/>
    <path d="M1267.500 676c3 6 11 10.500 22.500 9.500" fill="none" stroke="#45526b" stroke-width="1.100"/>
    <path d="M1257 684.800l5.600 9.600-3.700-1v7.300h-2.800v-7.300l-3.700 1z" fill="#2fb67e"/>
  </svg>
  <div class="c b14" style="left:27.500px;top:208.100px;width:300px;line-height:21px;letter-spacing:.09px">No activity in the last 24 hours</div>
  <div class="c d13" style="left:27.500px;top:235.200px;width:300px;line-height:17.600px;letter-spacing:.02px">Activities like browsing, viewing a product, and<br>adding to cart will appear here.</div>
</div>

<div class="abs" style="left:1456px;top:721px;width:59px;height:50px;background:#fff;border-radius:25px 4px 4px 25px;box-shadow:0 1px 4px rgba(30,40,60,.13)"></div>
<div class="abs" style="left:1461px;top:725.500px;width:40.800px;height:40.800px;border-radius:21px;background:#1a2e44;color:#fff;font-weight:bold;font-size:31.500px;line-height:42.500px;text-align:center"><span style="display:inline-block;transform:scaleX(.86)">?</span></div>
<div class="abs" style="left:1505.800px;top:740px;width:1.600px;height:12px;background:repeating-linear-gradient(#7d8690 0 1.600px,transparent 1.600px 3.400px)"></div>
<div class="abs" style="left:1519px;top:41px;width:17px;height:769px;background:linear-gradient(90deg,rgba(200,206,212,0),rgba(200,206,212,.62))"></div>
<svg class="abs" style="left:1530px;top:798px" width="6" height="12" viewBox="0 0 6 12"><path d="M6 2.500L2.800 12H6z" fill="#4d5853"/></svg>

</body>
</html>
